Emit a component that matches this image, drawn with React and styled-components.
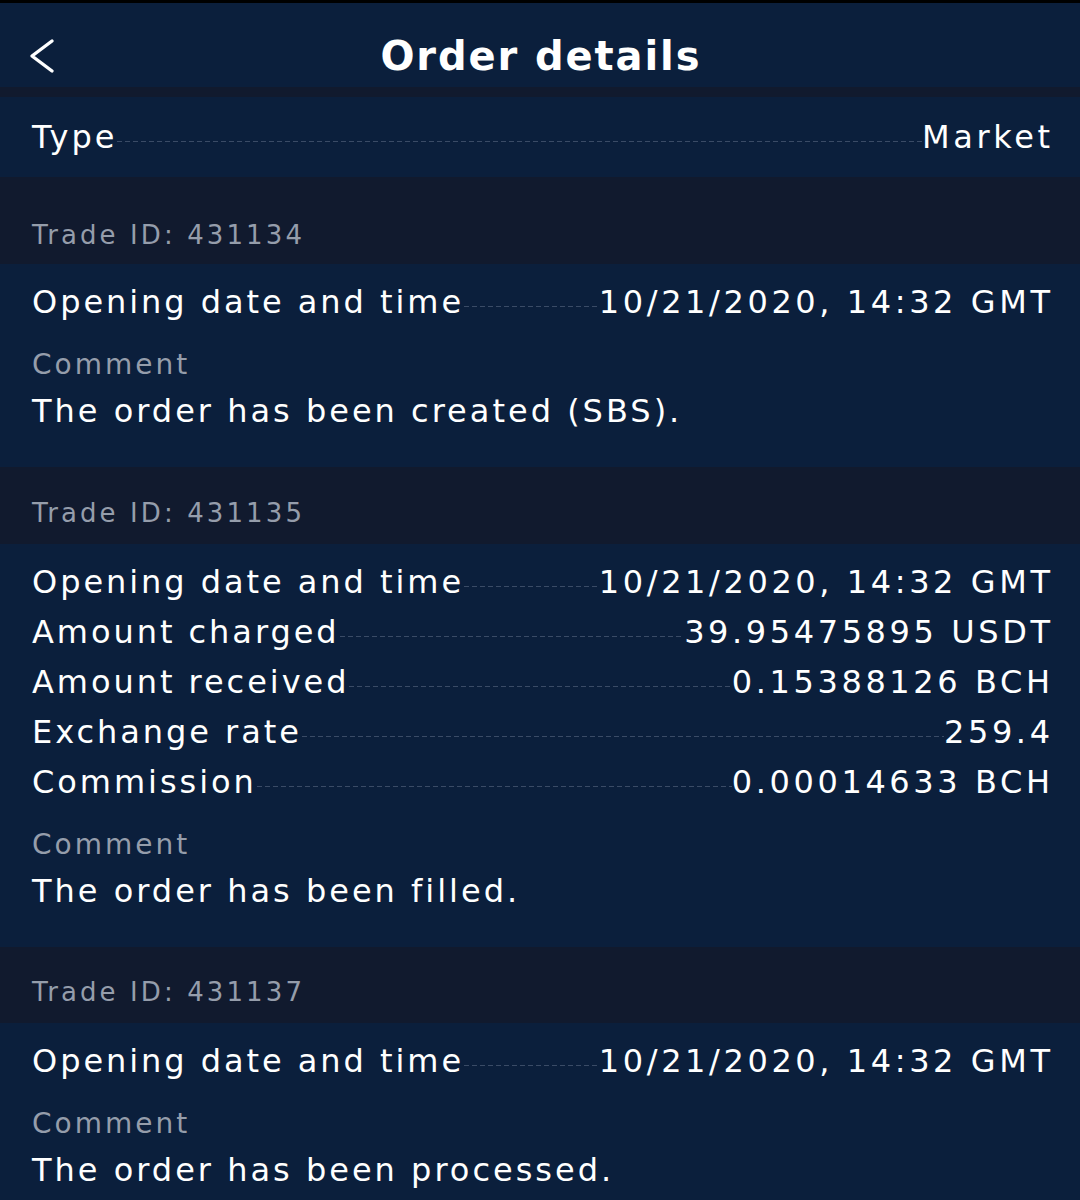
import React from "react";
import styled, { createGlobalStyle } from "styled-components";

const Global = createGlobalStyle`
  html, body { margin: 0; padding: 0; background: #111a2e; }
  body { font-family: "DejaVu Sans", "Open Sans", sans-serif; -webkit-font-smoothing: antialiased; }
`;

const Page = styled.div`
  width: 1080px;
  min-height: 1200px;
  background: #111a2e;
  border-top: 3px solid #000;
  box-sizing: border-box;
  overflow: hidden;
`;

const Header = styled.header`
  height: 84px;
  box-sizing: border-box;
  padding-top: 22px;
  background: #0b1f3c;
  display: grid;
  grid-template-columns: 1fr auto 1fr;
  align-items: center;
`;

const BackButton = styled.button`
  justify-self: start;
  margin-left: 27px;
  background: none;
  border: 0;
  padding: 0;
  display: flex;
  cursor: pointer;
`;

const Title = styled.h1`
  margin: 0;
  color: #fff;
  font-size: 40px;
  font-weight: 700;
  letter-spacing: 1.9px;
  margin-right: -1.9px;
  line-height: 1;
`;

const Section = styled.section`
  background: #0b1f3c;
  padding: ${(p) => p.$pad || "0"};
  margin-top: ${(p) => p.$mt || "0"};
  display: flex;
  flex-direction: column;
  padding-left: 32px;
  padding-right: 30px;
`;

const TradeHead = styled.div`
  height: ${(p) => p.$h || 77}px;
  display: flex;
  align-items: flex-end;
  padding: 0 32px ${(p) => p.$pb || 14}px;
  box-sizing: border-box;
  color: #959dab;
  font-size: 26px;
  letter-spacing: 3.1px;
  line-height: 32px;
`;

const Row = styled.div`
  display: flex;
  align-items: center;
  height: 50px;
  color: #fff;
  font-size: 32px;
`;

const Label = styled.span`
  white-space: nowrap;
  letter-spacing: 2.95px;
`;

const Leader = styled.span`
  flex: 1;
  align-self: center;
  margin-top: 8px;
  height: 1px;
  min-width: 4px;
  background: repeating-linear-gradient(
    to right,
    #3a4b66 0 5px,
    transparent 5px 8px
  );
`;

const Value = styled.span`
  white-space: nowrap;
  letter-spacing: 3.6px;
  margin-right: -3.6px;
`;

const CommentLabel = styled.div`
  color: #959dab;
  font-size: 28px;
  letter-spacing: 3px;
  height: 44px;
  display: flex;
  align-items: center;
  margin-top: 15px;
`;

const CommentText = styled.div`
  color: #fff;
  font-size: 32px;
  letter-spacing: 3px;
  height: 50px;
  display: flex;
  align-items: center;
`;

function Chevron() {
  return (
    <svg width="30" height="36" viewBox="0 0 30 36" fill="none">
      <path d="M25 3 L5 18 L25 33" stroke="#fff" strokeWidth="3.4" strokeLinecap="round" strokeLinejoin="round" />
    </svg>
  );
}

function DetailRow({ label, value }) {
  return (
    <Row>
      <Label>{label}</Label>
      <Leader />
      <Value>{value}</Value>
    </Row>
  );
}

const trades = [
  {
    id: "431134",
    rows: [["Opening date and time", "10/21/2020, 14:32 GMT"]],
    comment: "The order has been created (SBS).",
  },
  {
    id: "431135",
    rows: [
      ["Opening date and time", "10/21/2020, 14:32 GMT"],
      ["Amount charged", "39.95475895 USDT"],
      ["Amount received", "0.15388126 BCH"],
      ["Exchange rate", "259.4"],
      ["Commission", "0.00014633 BCH"],
    ],
    comment: "The order has been filled.",
  },
  {
    id: "431137",
    rows: [["Opening date and time", "10/21/2020, 14:32 GMT"]],
    comment: "The order has been processed.",
  },
];

export default function App() {
  return (
    <Page>
      <Global />
      <Header>
        <BackButton aria-label="Back">
          <Chevron />
        </BackButton>
        <Title>Order details</Title>
        <span />
      </Header>
      <Section $mt="10px" $pad="15px 0 15px">
        <DetailRow label="Type" value="Market" />
      </Section>
      {trades.map((t, i) => (
        <React.Fragment key={t.id}>
          <TradeHead $h={i === 0 ? 87 : i === 2 ? 76 : 77} $pb={i === 0 ? 13 : 15}>
            Trade ID: {t.id}
          </TradeHead>
          <Section $pad="13px 0 31px">
            {t.rows.map(([l, v]) => (
              <DetailRow key={l} label={l} value={v} />
            ))}
            <CommentLabel>Comment</CommentLabel>
            <CommentText>{t.comment}</CommentText>
          </Section>
        </React.Fragment>
      ))}
    </Page>
  );
}
